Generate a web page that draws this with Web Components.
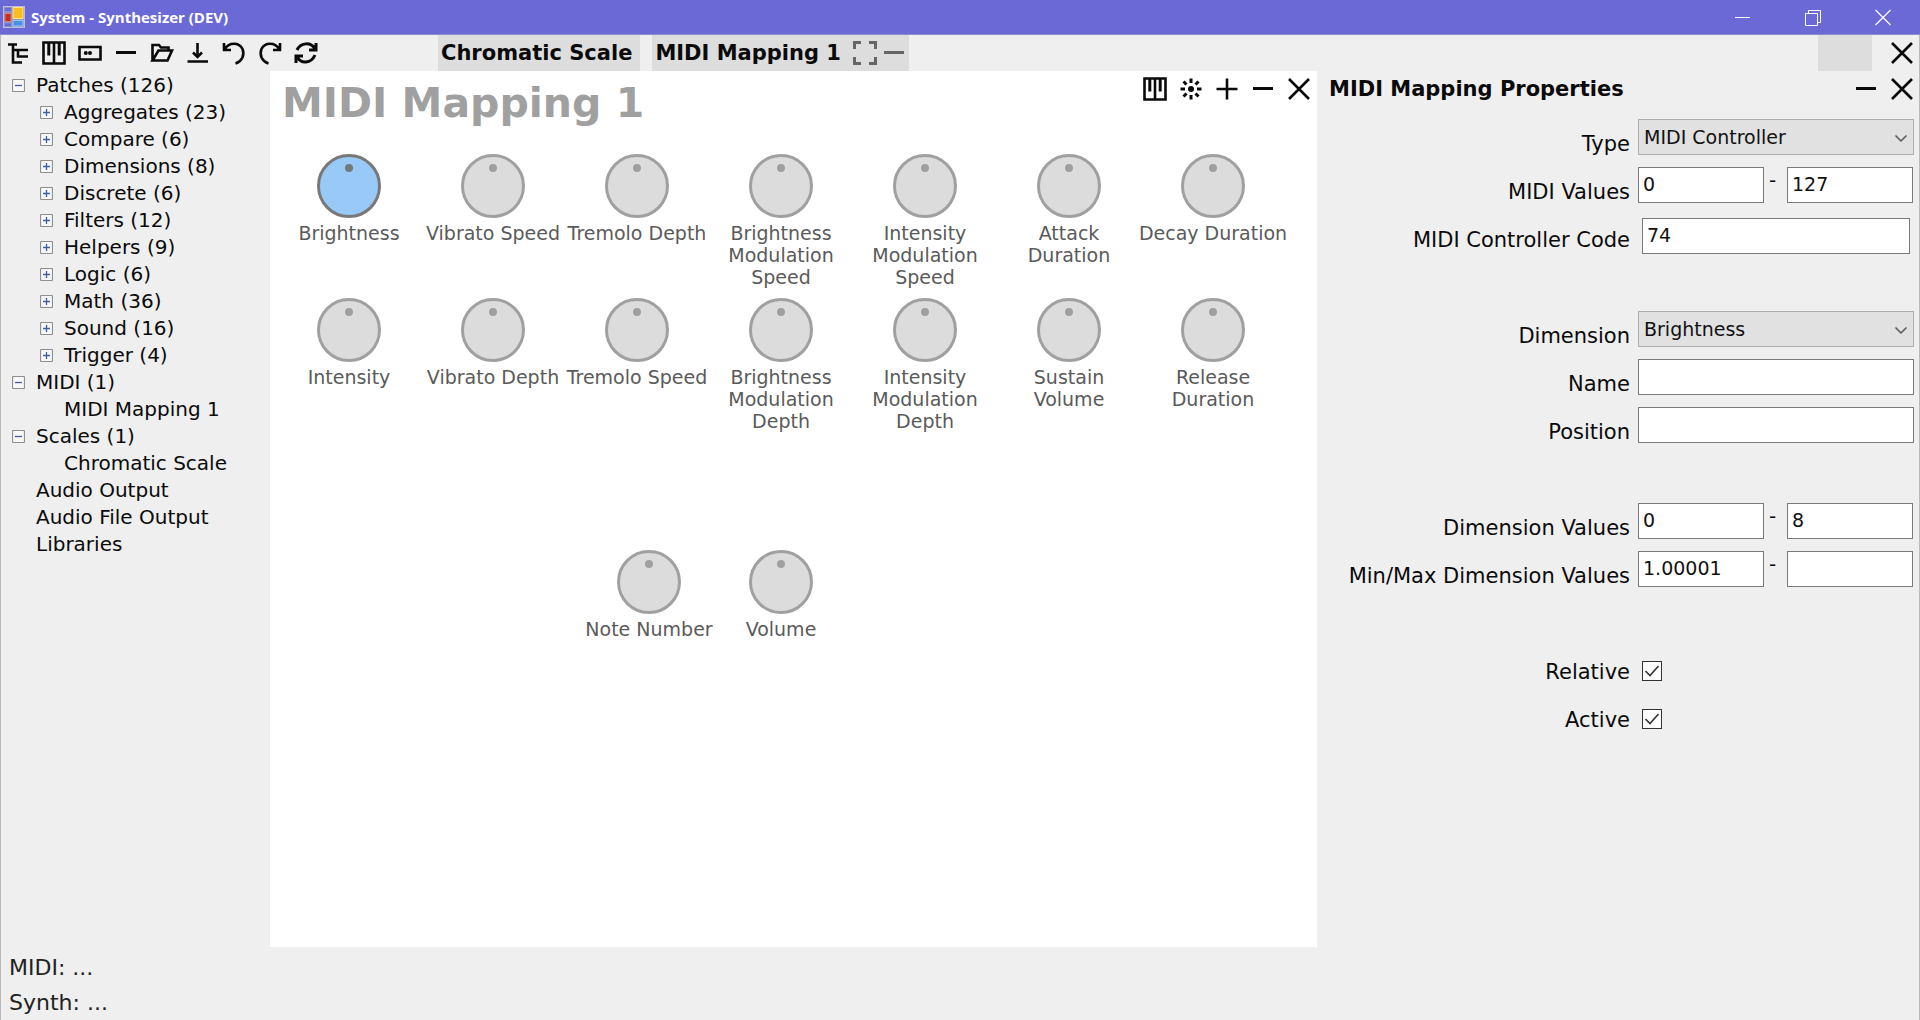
<!DOCTYPE html>
<html lang="en">
<head>
<meta charset="utf-8">
<title>System - Synthesizer (DEV)</title>
<style>
  html, body { height: 100%; margin: 0; }
  body { font-family: "DejaVu Sans", Verdana, sans-serif; color: #0a0a0a; background: #efefef; }
</style>
</head>
<body>
<synth-app></synth-app>
<script>
const ICONS = {
  tree: '<path d="M2 3.5H11M7 3.5V21.5H16M7 9H22M12 9V15.5H22"/>',
  piano: '<path d="M1.5 1.5H22.500V22.500H1.500ZM12 2V22"/><path d="M6.800 2V14.500M17.200 2V14.500" stroke-width="3"/>',
  module: '<path d="M1.500 6H22.500V18.500H1.500Z"/><circle cx="7.800" cy="12" r="2" fill="currentColor" stroke="none"/><circle cx="12" cy="12" r="2" fill="currentColor" stroke="none"/>',
  minus: '<path d="M2 11.500H22" stroke-width="3"/>',
  plus: '<path d="M1.500 12H22.500M12 1.500V22.500"/>',
  close: '<path d="M2 2L22 22M22 2L2 22"/>',
  open: '<path d="M2.500 19.500V4H9L11 6.500H18.500V9.500M2.500 19.500L8.500 9.500H22L17.500 19.500H2.500Z"/>',
  save: '<path d="M11.500 2V16M7 11.500L11.500 16L16 11.500M1.500 20.500H22"/>',
  undo: '<path d="M2 2V9H9M3 8C7 1 17 1 20.500 8C23 14 20 20.500 13.500 22.500"/>',
  redo: '<path d="M22 2V9H15M21 8C17 1 7 1 3.500 8C1 14 4 20.500 10.500 22.500"/>',
  refresh: '<path d="M22 2V9H15M21 8C17 1 7 1 3 9M2 22V15H9M3 16C7 23 17 23 21 14" stroke-width="3"/>',
  burst: '<path d="M12 1.500V6M12 18V22.500M1.500 12H6M18 12H22.500M4.500 4.500L7.500 7.500M16.500 16.500L19.500 19.500M4.500 19.500L7.500 16.500M16.500 7.500L19.500 4.500" stroke-width="3"/><circle cx="12" cy="12" r="3" fill="currentColor" stroke="none"/>',
  expand: '<path d="M1.500 8V1.500H8M16 1.500H22.500V8M22.500 16V22.500H16M8 22.500H1.500V16" stroke-width="3"/>',
  winmin: '<path d="M4 12.500H19" stroke-width="1"/>',
  winrestore: '<path d="M4.500 8.500H16.500V20.500H4.500ZM7.500 8.500V5.500H19.500V17.500H16.500" stroke-width="1"/>',
  winclose: '<path d="M4.500 5L19.500 20M19.500 5L4.500 20" stroke-width="1.200"/>'
};

class SynthElement extends HTMLElement {
  connectedCallback() {
    if (this.shadowRoot) return;
    this.attachShadow({ mode: 'open' }).innerHTML =
      '<style>*{box-sizing:border-box}button{font:inherit;color:inherit;background:none;border:0;padding:0;margin:0}' +
      this.css() + '</style>' + this.html();
  }
  attr(name, fallback = '') { return this.getAttribute(name) ?? fallback; }
}

customElements.define('icon-button', class extends SynthElement {
  css() { return `:host{display:block;width:var(--button-width,36px);height:36px}
    button{display:flex;align-items:center;justify-content:center;width:100%;height:100%}
    svg{display:block;flex:none;width:24px;height:24px;fill:none;stroke:currentColor;stroke-width:2.6}`; }
  html() { return `<button aria-label="${this.attr('label')}"><svg viewBox="0 0 24 24">${ICONS[this.attr('icon')]}</svg></button>`; }
});

customElements.define('title-bar', class extends SynthElement {
  css() { return `:host{display:flex;align-items:center;height:35px;padding:0 2px 0 3px;background:#6b69d6;color:#fff;border-bottom:1px solid #8f8fc8;box-sizing:border-box}
    .logo{width:22px;height:22px}
    h1{flex:1;margin:0 0 0 6px;font:700 15px/20px "Open Sans","Noto Sans",sans-serif}
    icon-button{--button-width:70px}`; }
  html() { return `<svg class="logo" viewBox="0 0 22 22">
      <rect x=".5" y=".5" width="21" height="21" fill="#8d93c4" stroke="#b9bce0"/>
      <rect x="10" y="1.500" width="10" height="11" fill="#f8bd22" stroke="#ffe48a"/>
      <rect x="2" y="7.500" width="6" height="8" fill="#c72c20" stroke="#d9826e"/>
      <rect x="10" y="14.500" width="10" height="5.500" fill="#4b8fe0" stroke="#9fc8f5"/>
      <path d="M2 2H8V5H2ZM2 17.500H8V20H2Z" fill="#6b69d6"/></svg>
    <h1><slot></slot></h1>
    <icon-button icon="winmin" label="Minimize"></icon-button>
    <icon-button icon="winrestore" label="Restore"></icon-button>
    <icon-button icon="winclose" label="Close"></icon-button>`; }
});

customElements.define('doc-tab', class extends SynthElement {
  css() { return `:host{display:flex;align-items:center;height:36px;padding:0 8px 0 3px;background:#ddd;font:bold 21px/36px "DejaVu Sans",Verdana,sans-serif;white-space:nowrap}
    :host([active]){padding-right:0}
    .tools{display:flex}
    :host([active]) .tools{padding-left:10px}
    ::slotted(icon-button){--button-width:29px;color:#666}`; }
  html() { return `<button><slot></slot></button><div class="tools"><slot name="tools"></slot></div>`; }
});

customElements.define('tool-bar', class extends SynthElement {
  css() { return `:host{display:grid;grid-template-columns:438px 1fr auto;height:36px}
    .tools,.tabs,.end{display:flex}
    .tabs{gap:12px}
    .blank{width:54px;background:#ddd}
    .end{gap:12px}`; }
  html() {
    const tools = [['tree','Document tree'],['piano','Instrument'],['module','Patch'],['minus','Remove'],['open','Open'],['save','Save'],['undo','Undo'],['redo','Redo'],['refresh','Refresh']];
    return `<div class="tools">${tools.map(([i, l]) => `<icon-button icon="${i}" label="${l}"></icon-button>`).join('')}</div>
    <div class="tabs"><doc-tab>Chromatic Scale</doc-tab>
      <doc-tab active>MIDI Mapping 1<icon-button slot="tools" icon="expand" label="Expand"></icon-button><icon-button slot="tools" icon="minus" label="Close tab"></icon-button></doc-tab></div>
    <div class="end"><div class="blank"></div><icon-button icon="close" label="Close document"></icon-button></div>`; }
});

customElements.define('tree-item', class extends SynthElement {
  css() { return `:host{display:block}
    .row{display:flex;align-items:center;gap:11px;height:27px;font-size:20px;line-height:27px;white-space:nowrap}
    .mark{flex:none;width:13px;height:13px}
    svg{display:block;width:13px;height:13px}
    .children{padding-left:28px}`; }
  html() {
    const s = this.attr('state');
    const box = s ? `<svg viewBox="0 0 13 13"><rect x=".5" y=".5" width="12" height="12" rx="1" fill="#f8f8f8" stroke="#8f8f8f" stroke-width="1.200"/><path d="M3 6.500H10${s === 'closed' ? 'M6.500 3V10' : ''}" stroke="#3f5ba9" stroke-width="1.300"/></svg>` : '';
    return `<div class="row">${s ? `<button class="mark" aria-label="Toggle ${this.attr('text')}">${box}</button>` : '<span class="mark"></span>'}<button>${this.attr('text')}</button></div><div class="children"><slot></slot></div>`;
  }
});

customElements.define('document-tree', class extends SynthElement {
  css() { return `:host{display:block;padding:1px 0 0 12px}`; }
  html() {
    const groups = ['Aggregates (23)','Compare (6)','Dimensions (8)','Discrete (6)','Filters (12)','Helpers (9)','Logic (6)','Math (36)','Sound (16)','Trigger (4)'];
    return `<tree-item state="open" text="Patches (126)">${groups.map(g => `<tree-item state="closed" text="${g}"></tree-item>`).join('')}</tree-item>
    <tree-item state="open" text="MIDI (1)"><tree-item text="MIDI Mapping 1"></tree-item></tree-item>
    <tree-item state="open" text="Scales (1)"><tree-item text="Chromatic Scale"></tree-item></tree-item>
    <tree-item text="Audio Output"></tree-item><tree-item text="Audio File Output"></tree-item><tree-item text="Libraries"></tree-item>`; }
});

customElements.define('dial-knob', class extends SynthElement {
  css() { return `:host{display:block;--ring:#a0a0a0;--face:#dcdcdc}
    :host([selected]){--ring:#787878;--face:#99c9f7}
    button{display:flex;flex-direction:column;align-items:center;gap:4px;width:100%;font-size:19px;line-height:22px;color:#5a5a5a;white-space:pre}
    svg{display:block;width:64px;height:64px}`; }
  html() { return `<button><svg viewBox="0 0 64 64"><circle cx="32" cy="32" r="30.500" fill="var(--face)" stroke="var(--ring)" stroke-width="3"/><circle cx="32" cy="14" r="4" fill="var(--ring)"/></svg><span><slot></slot></span></button>`; }
});

customElements.define('mapping-canvas', class extends SynthElement {
  css() { return `:host{display:block;background:#fff}
    header{display:flex;justify-content:space-between;height:83px;padding-left:12px}
    h2{margin:0;padding-top:7px;font-size:41px;line-height:50px;color:#a0a0a0;white-space:nowrap}
    nav{display:flex}
    .grid{display:grid;grid-template-columns:repeat(7,144px);grid-auto-rows:144px;padding-left:7px}
    .pair{display:grid;grid-template-columns:repeat(2,132px);padding:108px 0 0 313px}`; }
  html() {
    const names = ['Brightness','Vibrato Speed','Tremolo Depth','Brightness\nModulation\nSpeed','Intensity\nModulation\nSpeed','Attack\nDuration','Decay Duration',
      'Intensity','Vibrato Depth','Tremolo Speed','Brightness\nModulation\nDepth','Intensity\nModulation\nDepth','Sustain\nVolume','Release\nDuration'];
    return `<header><h2>MIDI Mapping 1</h2><nav>${[['piano','Instrument'],['burst','Play'],['plus','Add'],['minus','Remove'],['close','Close']].map(([i, l]) => `<icon-button icon="${i}" label="${l}"></icon-button>`).join('')}</nav></header>
    <div class="grid">${names.map((n, i) => `<dial-knob${i ? '' : ' selected'}>${n}</dial-knob>`).join('')}</div>
    <div class="pair"><dial-knob>Note Number</dial-knob><dial-knob>Volume</dial-knob></div>`; }
});

customElements.define('property-row', class extends SynthElement {
  css() { return `:host{display:grid;grid-template-columns:minmax(0,313px) minmax(0,276px);gap:8px;height:48px}
    label{padding-top:13px;text-align:right;font-size:21px;line-height:24px;white-space:nowrap}
    .field{display:flex;align-items:flex-start}
    input,select{display:block;height:36px;margin:0;border:1px solid #7a7a7a;border-radius:0;background:#fff;color:#111;font:19px/24px "DejaVu Sans",Verdana,sans-serif;outline:0}
    input[type=text]{flex:1;min-width:0;padding:0 4px 2px}
    .range input[type=text]{flex:0 0 126px}
    .range{gap:5px}.range span{width:13px;font-size:20px;line-height:26px}
    .inset{padding:3px 4px 0}
    .drop{position:relative}
    select{appearance:none;width:100%;padding:0 5px;background:#e1e1e1;border-color:#adadad}
    .drop svg{position:absolute;right:6px;top:12px;width:14px;height:14px;fill:none;stroke:#555;stroke-width:1.500;pointer-events:none}
    .tick{padding:14px 4px 0;display:grid;justify-content:start}
    .tick>*{grid-area:1/1}
    input[type=checkbox]{appearance:none;width:20px;height:20px;border-color:#333}
    .tick svg{width:20px;height:20px;fill:none;stroke:#333;stroke-width:1.600;pointer-events:none}`; }
  html() {
    const kind = this.attr('kind', 'text'), v = this.attr('value'), label = this.attr('label');
    if (kind === 'select') return `<label for="f">${label}</label><div class="field drop"><select id="f"><option>${v}</option></select><svg viewBox="0 0 14 14"><path d="M1.500 4.500L7 10L12.500 4.500"/></svg></div>`;
    if (kind === 'range') return `<label for="f">${label}</label><div class="field range"><input type="text" id="f" value="${v}"><span>-</span><input type="text" aria-label="${label} upper" value="${this.attr('to')}"></div>`;
    if (kind === 'check') return `<label for="f">${label}</label><div class="tick"><input type="checkbox" id="f" checked><svg viewBox="0 0 20 20"><path d="M3.500 10L8 14.500L16.500 5"/></svg></div>`;
    return `<label for="f">${label}</label><div class="field${this.hasAttribute('inset') ? ' inset' : ''}"><input type="text" id="f" value="${v}"></div>`;
  }
});

customElements.define('properties-panel', class extends SynthElement {
  css() { return `:host{display:block}
    header{display:flex;height:48px}
    h2{flex:1;margin:0 0 0 12px;font-size:21px;line-height:36px;white-space:nowrap}
    section{padding-bottom:48px;display:grid;justify-content:end;grid-template-columns:minmax(0,597px)}
    form{margin-right:6px}`; }
  html() { return `<header><h2>MIDI Mapping Properties</h2><icon-button icon="minus" label="Remove"></icon-button><icon-button icon="close" label="Close"></icon-button></header>
    <form>
      <section><property-row label="Type" kind="select" value="MIDI Controller"></property-row>
        <property-row label="MIDI Values" kind="range" value="0" to="127"></property-row>
        <property-row label="MIDI Controller Code" value="74" inset></property-row></section>
      <section><property-row label="Dimension" kind="select" value="Brightness"></property-row>
        <property-row label="Name"></property-row><property-row label="Position"></property-row></section>
      <section><property-row label="Dimension Values" kind="range" value="0" to="8"></property-row>
        <property-row label="Min/Max Dimension Values" kind="range" value="1.00001" to=""></property-row></section>
      <section><property-row label="Relative" kind="check"></property-row><property-row label="Active" kind="check"></property-row></section>
    </form>`; }
});

customElements.define('status-area', class extends SynthElement {
  css() { return `:host{display:block;height:73px;padding:3px 0 0 9px;box-sizing:border-box;font-size:22px;line-height:35px;color:#222}`; }
  html() { return `<div>MIDI: ...</div><div>Synth: ...</div>`; }
});

customElements.define('synth-app', class extends SynthElement {
  css() { return `:host{display:flex;flex-direction:column;min-height:100vh;box-shadow:inset 1px 0 #bbb,inset -1px 0 #bbb}
    main{flex:1;display:grid;grid-template-columns:270px minmax(0,1fr) 603px}`; }
  html() { return `<title-bar>System - Synthesizer (DEV)</title-bar><tool-bar></tool-bar>
    <main><document-tree></document-tree><mapping-canvas></mapping-canvas><properties-panel></properties-panel></main>
    <status-area></status-area>`; }
});
</script>
</body>
</html>
